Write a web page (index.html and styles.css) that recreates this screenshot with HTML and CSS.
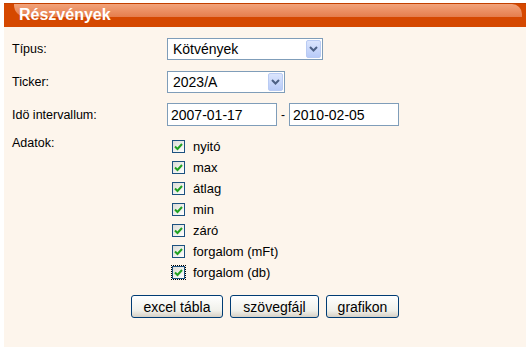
FILE: index.html
```html
<!DOCTYPE html>
<html lang="hu">
<head>
<meta charset="utf-8">
<title>Részvények</title>
<link rel="stylesheet" href="styles.css">
</head>
<body>
<div class="panel">
  <div class="header"><span class="title">Részvények</span></div>
  <div class="form">
    <div class="row">
      <span class="label">Típus:</span>
      <span class="select wide"><span class="value">Kötvények</span><span class="arrow"><svg width="9" height="6" viewBox="0 0 9 6"><path d="M1 1 L4.5 4.5 L8 1" fill="none" stroke="#4d6185" stroke-width="2"/></svg></span></span>
    </div>
    <div class="row">
      <span class="label">Ticker:</span>
      <span class="select narrow"><span class="value">2023/A</span><span class="arrow"><svg width="9" height="6" viewBox="0 0 9 6"><path d="M1 1 L4.5 4.5 L8 1" fill="none" stroke="#4d6185" stroke-width="2"/></svg></span></span>
    </div>
    <div class="row">
      <span class="label">Idö intervallum:</span>
      <span class="dates"><input class="date" type="text" value="2007-01-17"><span class="dash">-</span><input class="date" type="text" value="2010-02-05"></span>
    </div>
    <div class="row top">
      <span class="label adatok">Adatok:</span>
      <div class="checks">
        <label class="check"><span class="box"><svg width="9" height="8" viewBox="0 0 9 8"><path d="M1 3.5 L3.5 6 L8 1" fill="none" stroke="#21a121" stroke-width="2"/></svg></span>nyitó</label>
        <label class="check"><span class="box"><svg width="9" height="8" viewBox="0 0 9 8"><path d="M1 3.5 L3.5 6 L8 1" fill="none" stroke="#21a121" stroke-width="2"/></svg></span>max</label>
        <label class="check"><span class="box"><svg width="9" height="8" viewBox="0 0 9 8"><path d="M1 3.5 L3.5 6 L8 1" fill="none" stroke="#21a121" stroke-width="2"/></svg></span>átlag</label>
        <label class="check"><span class="box"><svg width="9" height="8" viewBox="0 0 9 8"><path d="M1 3.5 L3.5 6 L8 1" fill="none" stroke="#21a121" stroke-width="2"/></svg></span>min</label>
        <label class="check"><span class="box"><svg width="9" height="8" viewBox="0 0 9 8"><path d="M1 3.5 L3.5 6 L8 1" fill="none" stroke="#21a121" stroke-width="2"/></svg></span>záró</label>
        <label class="check"><span class="box"><svg width="9" height="8" viewBox="0 0 9 8"><path d="M1 3.5 L3.5 6 L8 1" fill="none" stroke="#21a121" stroke-width="2"/></svg></span>forgalom (mFt)</label>
        <label class="check"><span class="box focus"><svg width="9" height="8" viewBox="0 0 9 8"><path d="M1 3.5 L3.5 6 L8 1" fill="none" stroke="#21a121" stroke-width="2"/></svg></span>forgalom (db)</label>
      </div>
    </div>
    <div class="buttons">
      <button class="btn b1" type="button">excel tábla</button>
      <button class="btn b2" type="button">szövegfájl</button>
      <button class="btn b3" type="button">grafikon</button>
    </div>
  </div>
</div>
</body>
</html>
```
FILE: styles.css
```css
html, body {
  margin: 0;
  padding: 0;
  background: #ffffff;
}
body {
  font-family: "Liberation Sans", Arial, sans-serif;
  color: #000;
}
.panel {
  margin: 3px 4px 0 4px;
  width: 522px;
  height: 344px;
  background: #fdf5ec;
}
.header {
  position: relative;
  height: 24px;
  background: #d54800;
  overflow: hidden;
  border-top: 1px solid #c24000;
  box-sizing: border-box;
}
.header::before {
  content: "";
  position: absolute;
  left: 10px;
  right: 4px;
  top: 0;
  height: 13px;
  background: linear-gradient(#f2a37a, #e57d4c);
  border-radius: 0 10px 0 12px;
}
.title {
  position: relative;
  display: block;
  padding-left: 15px;
  font-weight: bold;
  font-size: 16px;
  line-height: 21px;
  color: #ffffff;
}
.form {
  padding: 11px 0 0 8px;
}
.row {
  display: flex;
  align-items: center;
  margin-bottom: 10px;
}
.row.top {
  align-items: flex-start;
  margin-top: 5px;
  margin-bottom: 0;
}
.label {
  width: 155px;
  flex: none;
  font-size: 12.5px;
}
.adatok {
  line-height: 14px;
}
.select {
  display: flex;
  align-items: center;
  justify-content: space-between;
  height: 22px;
  box-sizing: border-box;
  border: 1px solid #7f9db9;
  background: #ffffff;
  padding: 0 1px 0 5px;
  font-size: 14px;
}
.select.wide { width: 156px; }
.select.narrow { width: 118px; }
.row:nth-child(1) { margin-bottom: 11px; }
.arrow {
  width: 15px;
  height: 18px;
  box-sizing: border-box;
  border: 1px solid #b9cbf3;
  border-radius: 2px;
  background: linear-gradient(#dbe5fd, #b8cbf8);
  display: flex;
  align-items: center;
  justify-content: center;
}
.dates {
  display: flex;
  align-items: center;
}
.date {
  width: 110px;
  height: 23px;
  box-sizing: border-box;
  border: 1px solid #7f9db9;
  background: #ffffff;
  padding: 0 3px;
  margin: 0;
  font-family: "Liberation Sans", Arial, sans-serif;
  font-size: 14px;
  color: #000;
  outline: none;
}
.dash {
  width: 12px;
  text-align: center;
  font-size: 12px;
}
.checks {
  display: flex;
  flex-direction: column;
  padding-left: 5px;
}
.check {
  display: flex;
  align-items: center;
  height: 21px;
  font-size: 13px;
}
.box {
  width: 13px;
  height: 13px;
  box-sizing: border-box;
  border: 1px solid #1c5180;
  background: linear-gradient(135deg, #dcdcd7, #ffffff);
  display: flex;
  align-items: center;
  justify-content: center;
  margin-right: 8px;
  flex: none;
}
.box.focus {
  outline: 1px dotted #000;
  outline-offset: 0px;
}
.buttons {
  display: flex;
  justify-content: center;
  gap: 7px;
  margin-top: 12px;
  padding-right: 8px;
}
.btn {
  height: 23px;
  box-sizing: border-box;
  border: 1px solid #003c74;
  border-radius: 3px;
  background: linear-gradient(#ffffff, #f0f0ea 70%, #d6d0c5);
  font-family: "Liberation Sans", Arial, sans-serif;
  font-size: 14px;
  font-weight: normal;
  color: #000;
  padding: 0;
  margin: 0;
}
.b1 { width: 92px; }
.b2 { width: 89px; }
.b3 { width: 73px; }
```
